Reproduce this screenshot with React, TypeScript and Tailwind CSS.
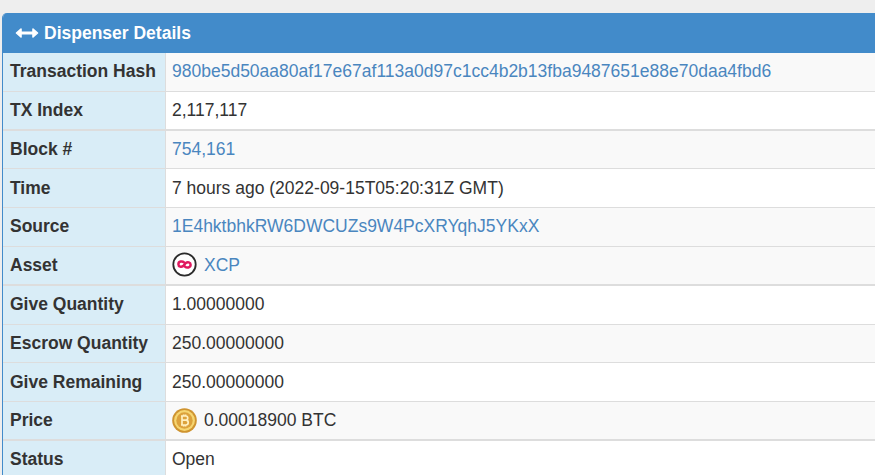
const HASH = "980be5d50aa80af17e67af113a0d97c1cc4b2b13fba9487651e88e70daa4fbd6";

function XcpIcon() {
  return (
    <svg width="25" height="25" viewBox="0 0 25 25" className="shrink-0">
      <circle cx="12.5" cy="12.5" r="11.2" fill="#fff" stroke="#2b2b2b" strokeWidth="1.8" />
      <path
        d="M12 10.4 C10.4 8.8 6.4 9.2 6.4 12.2 C6.4 14.8 9.4 15.4 11.2 14 L13.8 11 C15.6 9.6 18.6 10.2 18.6 12.8 C18.6 15.8 14.6 16.2 13 14.6"
        fill="none"
        stroke="#e0195f"
        strokeWidth="2.5"
        strokeLinecap="round"
      />
    </svg>
  );
}

function BtcIcon() {
  return (
    <svg width="25" height="25" viewBox="0 0 25 25" className="shrink-0">
      <circle cx="12.5" cy="12.5" r="12.3" fill="#cf9430" />
      <circle cx="12.5" cy="12.5" r="10.4" fill="#f6d671" />
      <circle cx="12.5" cy="12.5" r="8.2" fill="#dca23c" />
      <path
        d="M10 7.5 V17.5 M9 8 H13.8 C16.4 8 16.4 12.2 13.8 12.2 H10 M13.8 12.2 C17 12.2 17 17 13.8 17 H9 M11.6 6.5 V8 M13.6 6.5 V8 M11.6 17 V18.5 M13.6 17 V18.5"
        fill="none"
        stroke="#fff0c0"
        strokeWidth="1.7"
      />
    </svg>
  );
}

const Link = ({ children }: { children: React.ReactNode }) => (
  <a className="text-[#4a86bf]">{children}</a>
);

const rows: { label: string; value: React.ReactNode; icon?: React.ReactNode; heavy?: boolean; stripe?: boolean }[] = [
  { label: "Transaction Hash", value: <Link>{HASH}</Link>, stripe: true },
  { label: "TX Index", value: "2,117,117", heavy: true },
  { label: "Block #", value: <Link>754,161</Link>, stripe: true },
  { label: "Time", value: "7 hours ago (2022-09-15T05:20:31Z GMT)" },
  { label: "Source", value: <Link>1E4hktbhkRW6DWCUZs9W4PcXRYqhJ5YKxX</Link>, stripe: true },
  { label: "Asset", value: <Link>XCP</Link>, icon: <XcpIcon />, heavy: true, stripe: true },
  { label: "Give Quantity", value: "1.00000000" },
  { label: "Escrow Quantity", value: "250.00000000", stripe: true },
  { label: "Give Remaining", value: "250.00000000" },
  { label: "Price", value: "0.00018900 BTC", icon: <BtcIcon />, heavy: true, stripe: true },
  { label: "Status", value: "Open" },
];

export default function App() {
  return (
    <div className="h-[475px] w-[875px] overflow-hidden bg-[#eeeeee] pt-[13px] pl-[2px] font-['Liberation_Sans',Arial,sans-serif] text-[17.5px] text-[#333333]">
      <div className="overflow-hidden rounded-tl-[5px] border-l border-[#428bca]">
        <div className="flex h-10 items-center gap-[5px] bg-[#428bca] pl-[12px] font-bold text-white">
          <svg width="24" height="12" viewBox="0 0 24 12">
            <path d="M3 6 H21" fill="none" stroke="#fff" strokeWidth="3.2" />
            <path d="M6 2 L1.5 6 L6 10 Z M18 2 L22.5 6 L18 10 Z" fill="#fff" stroke="#fff" strokeWidth="1.6" strokeLinejoin="round" />
          </svg>
          <span>Dispenser Details</span>
        </div>
        {rows.map((row) => (
          <div
            key={row.label}
            className={`flex h-[38.8px] border-b ${row.heavy ? "border-b-2" : ""} border-[#dddddd] ${row.stripe ? "bg-[#f9f9f9]" : "bg-white"}`}
          >
            <div className="flex w-[163px] shrink-0 items-center border-r border-[#dddddd] bg-[#d9edf7] pb-px pl-[7px] font-bold">
              {row.label}
            </div>
            <div className="flex items-center gap-[7px] pb-px pl-[6px]">
              {row.icon}
              <span>{row.value}</span>
            </div>
          </div>
        ))}
      </div>
    </div>
  );
}
